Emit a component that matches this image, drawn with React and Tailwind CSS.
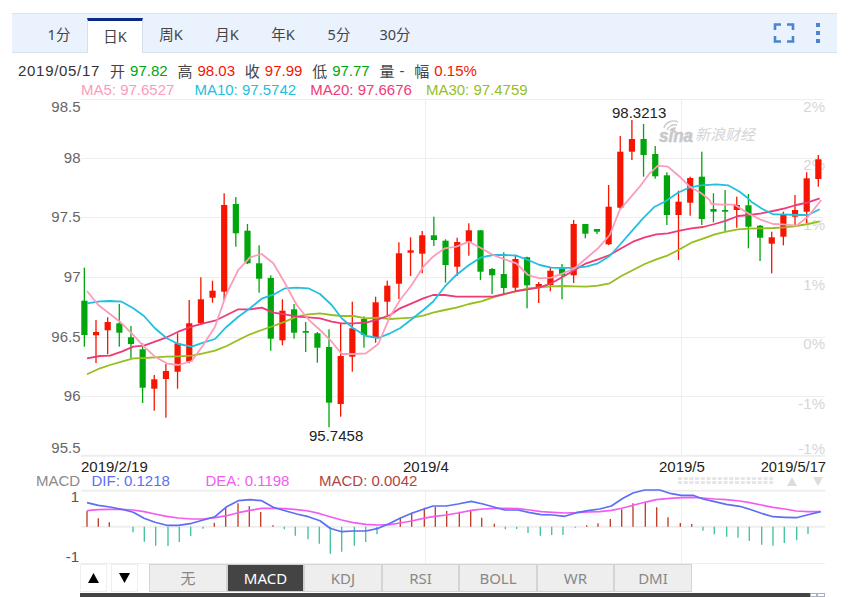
const RED = '#f61500';
const GREEN = '#00a60b';

// [red?, wickTop, wickBottom, bodyTop, bodyBottom]
const candles = [
  [0, 267.7, 346.7, 300.7, 335], [1, 320, 363, 332, 335.3], [1, 317.3, 354.3, 322, 330.3], [0, 304, 346.7, 323.3, 332.7],
  [0, 326, 358, 337.3, 344], [0, 343.3, 403, 349.3, 387.7], [1, 375, 410.7, 379.3, 388.7], [1, 364, 417.7, 371, 379],
  [1, 333.3, 388.7, 343.3, 371.7], [1, 300, 363.3, 323.3, 361.7], [1, 277.3, 325, 299.3, 323.3], [1, 280.7, 302.7, 290.7, 297.7],
  [1, 193.3, 300.7, 205, 291.7], [0, 197, 246.7, 204, 233.3], [0, 224, 264, 230.7, 263.3], [0, 245.3, 292.7, 263.3, 278.7],
  [0, 275.3, 350.7, 278, 338.7], [1, 299.3, 345.3, 310.7, 340.3], [0, 304, 338.7, 309.3, 332.7], [0, 322, 352, 331, 332.7],
  [0, 332, 362.7, 333.3, 347.7], [0, 329.3, 427.3, 347, 402.7], [1, 324, 416.7, 356, 404], [1, 301.7, 371.7, 328.3, 356.7],
  [0, 316.3, 347.7, 319, 335], [1, 296.7, 342.7, 302.3, 337.3], [1, 280.7, 315, 285.7, 301.7], [1, 242.3, 299, 253.3, 283.7],
  [1, 237.3, 276, 250.3, 252.7], [1, 231, 273.3, 235.3, 253.7], [0, 216.7, 246, 235.3, 240], [0, 239.3, 282.7, 240.7, 265],
  [1, 237.7, 276, 242, 266.7], [1, 223.3, 255.7, 230.3, 241.7], [0, 230, 280, 230.3, 271.7], [0, 268, 294, 269, 275.3],
  [0, 252.3, 294, 274, 288], [1, 254.7, 291.3, 259, 287.7], [0, 256.7, 308.3, 257.3, 285.3], [1, 282, 303, 284, 287.3],
  [1, 267.7, 291.3, 270.7, 285], [0, 264, 299.3, 269, 275.3], [1, 220, 283, 224, 275.3], [0, 224, 238.3, 224, 233.7],
  [0, 229, 234, 229, 231.7], [1, 185, 245, 206.7, 244.3], [1, 136, 210, 151.7, 207.7], [1, 120, 160, 139, 151.7],
  [0, 124, 176.7, 139, 155], [0, 146, 178.7, 154, 176.3], [0, 172.3, 225, 175.3, 215], [1, 190.7, 260, 201.7, 215],
  [1, 176.7, 215.7, 178, 202.7], [0, 151.7, 225, 176.7, 219], [0, 193.3, 222.3, 209, 211.7], [0, 190, 231.7, 210, 211.7],
  [1, 196.7, 227.7, 205, 210], [0, 194, 248.3, 205.3, 226.7], [0, 225, 261, 225.7, 237.7], [1, 231.7, 273.3, 237.3, 243.7],
  [1, 211.7, 245.3, 215, 236.7], [1, 195, 225, 210, 216.7], [1, 172.3, 223.3, 178.3, 211.7], [1, 155, 186.7, 159.3, 179],
];

const pts = (list) => list.map((p) => `${p[0].toFixed(1)},${p[1].toFixed(1)}`).join(' ');

const ma5 = [[87, 291], [98.3, 305], [110, 314], [121.7, 323.3], [133.3, 335], [144, 346.7], [155, 356.7], [166.7, 363.3], [178.3, 365], [191.7, 361], [203.3, 345], [215, 326.7], [226.7, 293.3], [238.3, 270], [250, 257.3], [261.7, 254], [273.3, 263.3], [285, 283.3], [296.7, 305], [308.3, 319.3], [320, 330], [331.7, 341.7], [341.7, 354], [353.3, 354], [366, 353.3], [378.3, 344], [390, 316.7], [400, 300], [411.7, 285], [423.3, 266.7], [433, 256.7], [444.7, 248.3], [456.3, 246.7], [469, 241.7], [481.3, 248.3], [493, 255], [504.7, 259.3], [516.3, 263.3], [528, 275], [539.7, 278.3], [551.3, 277.7], [563, 273.3], [574.7, 268.3], [586.3, 258.3], [598, 248.3], [609.7, 235], [619.7, 210], [629.7, 198.3], [639.7, 186.7], [649.7, 173.3], [658, 165.7], [668, 166.7], [679.7, 176.7], [689.7, 186.7], [701.3, 193.3], [709.7, 200], [711.3, 204], [723, 204.7], [734.7, 204.7], [748, 213.3], [759.7, 219.3], [773, 224], [783, 224.3], [796.3, 225.7], [808, 216.7], [821.3, 200]];
const ma10 = [[87, 303.3], [100, 301.3], [110, 301], [121.7, 301.7], [133.3, 308.3], [144, 316], [155, 328.3], [166.7, 338.3], [178.3, 344], [191.7, 346.7], [203.3, 342.7], [215, 339], [226.7, 326.7], [238.3, 316.7], [250, 308.3], [261.7, 298.7], [273.3, 294.7], [285, 288.3], [296.7, 287.7], [308.3, 288.3], [320, 294], [331.7, 305], [341.7, 318.3], [353.3, 328.3], [366, 336], [378.3, 338], [390, 333.3], [400, 328.3], [411.7, 319.3], [423.3, 310], [433, 301.7], [444.7, 286.7], [456.3, 275], [469, 265], [481.3, 257.3], [493, 255], [504.7, 255], [516.3, 255.7], [528, 260], [539.7, 265], [551.3, 267.7], [563, 268], [574.7, 267.7], [586.3, 266.7], [598, 263.3], [609.7, 256], [619.7, 245], [631.3, 231.7], [643, 218.3], [654.7, 206.7], [664.7, 201.7], [678, 192.7], [689.7, 187.3], [701.3, 185.3], [716.3, 184.3], [728, 185.3], [739.7, 191.7], [748, 198.3], [751.3, 201.7], [761.3, 208.3], [773, 214.3], [783, 214.3], [796.3, 215], [808, 215], [819.7, 209.3]];
const ma20 = [[87, 358.3], [100, 356], [110, 355.7], [121.7, 351.7], [133.3, 346.7], [144, 345.7], [155, 341.7], [166.7, 337.3], [178.3, 331.7], [191.7, 326.7], [203.3, 323.3], [215, 320.7], [226.7, 315], [238.3, 309.3], [250, 309.3], [261.7, 307.7], [273.3, 312.7], [285, 314.3], [296.7, 316.7], [308.3, 317.3], [320, 318.3], [331.7, 321.7], [341.7, 323.3], [353.3, 323.3], [366, 322.7], [378.3, 319.3], [390, 315], [400, 308.3], [411.7, 303.3], [423.3, 298.3], [433, 295], [444.7, 295], [456.3, 296.7], [469, 296.7], [481.3, 296.7], [493, 296.7], [504.7, 294], [516.3, 291], [528, 289.3], [539.7, 287.3], [551.3, 283.3], [563, 276.7], [574.7, 270], [586.3, 263.3], [598, 259.3], [609.7, 255], [621.3, 248.3], [633, 241.7], [644.7, 237.3], [656.3, 234.3], [668, 233.3], [679.7, 230.7], [691.3, 228.3], [703, 227], [714.7, 224], [726.3, 220.7], [738, 216], [749.7, 215], [761.3, 213.3], [773, 211], [784.7, 208.3], [796.3, 205], [808, 202.3], [819.7, 198.3]];
const ma30 = [[87, 374.3], [100, 368.3], [110, 365], [121.7, 361.7], [133.3, 358.3], [144, 358], [155, 357.3], [166.7, 356.7], [178.3, 356.3], [191.7, 355.7], [203.3, 353.3], [215, 350.7], [226.7, 346], [238.3, 340], [250, 334.3], [261.7, 330], [273.3, 326], [285, 321.7], [296.7, 316.7], [308.3, 314.3], [320, 313.3], [331.7, 315], [341.7, 316], [353.3, 316], [366, 318.3], [378.3, 317.7], [390, 319], [400, 318.3], [411.7, 317.7], [423.3, 315.7], [433, 312.7], [444.7, 310], [456.3, 307.7], [469, 304], [481.3, 301.3], [493, 297.3], [504.7, 294], [516.3, 291.3], [528, 288.3], [539.7, 287.3], [551.3, 286.3], [563, 286], [574.7, 286.3], [586.3, 286.7], [598, 285.7], [609.7, 283.3], [621.3, 276], [633, 270], [644.7, 264], [656.3, 259.3], [668, 255.3], [679.7, 249.3], [691.3, 242.7], [703, 238.7], [714.7, 234.3], [726.3, 231.7], [738, 229.3], [749.7, 228.7], [761.3, 228.3], [773, 228], [784.7, 227.3], [796.3, 226], [808, 224], [819.7, 221.3]];

const dif = [[87, 502.7], [98.3, 505.3], [110, 507], [121.7, 509.3], [133.3, 512.3], [144, 518.3], [155, 522.3], [166.7, 525.3], [178.3, 525.3], [191.7, 523.3], [203.3, 520], [215, 516.7], [226.7, 506.7], [238.3, 500.7], [250, 499.7], [261.7, 500.7], [273.3, 507.3], [285, 510.7], [296.7, 514], [308.3, 516.7], [320, 520.7], [330, 528.3], [341.7, 531.7], [353.3, 531], [366, 531], [378.3, 528.3], [390, 523.3], [400, 518.3], [411.7, 513.3], [423.3, 509.3], [433, 506], [446.3, 506], [458, 504], [471.3, 501.3], [483, 504], [494.7, 507.3], [504.7, 510], [518, 510], [529.7, 512.7], [541.3, 514.7], [553, 515], [564.7, 516.3], [576.3, 512.7], [588, 510.7], [599.7, 509], [611.3, 506], [623, 498.3], [633, 493], [644.7, 490], [659.7, 490], [671.3, 493.7], [681.3, 495.3], [693, 495.3], [703, 499], [714.7, 501.7], [726.3, 504.3], [739.7, 506.3], [749.7, 509.3], [761.3, 513.3], [773, 516.7], [784.7, 517.3], [796.3, 517.7], [808, 514.7], [820.7, 511.7]];
const dea = [[87, 510.7], [98.3, 509.7], [110, 509.3], [121.7, 509.3], [133.3, 510], [144, 511.7], [155, 514], [166.7, 516.3], [178.3, 518], [191.7, 519], [203.3, 519], [215, 517.7], [226.7, 515.7], [238.3, 512.7], [250, 510.3], [261.7, 508.3], [273.3, 508.3], [285, 508.7], [296.7, 509.7], [308.3, 511], [320, 513.7], [330, 516.7], [341.7, 520], [353.3, 522.7], [366, 524.3], [378.3, 525], [390, 524.7], [400, 523], [411.7, 521], [423.3, 518.3], [433, 516.7], [446.3, 515], [458, 513], [471.3, 510.3], [483, 509], [494.7, 508.3], [504.7, 508.3], [518, 508.7], [529.7, 510], [541.3, 511.7], [553, 512.3], [564.7, 513], [576.3, 512.7], [588, 512], [599.7, 511.7], [611.3, 510.3], [623, 508], [633, 505.3], [644.7, 502.3], [656.3, 499.7], [669.7, 498.3], [681.3, 497.7], [693, 497.3], [703, 498], [714.7, 499], [726.3, 499.7], [739.7, 501], [749.7, 502.7], [761.3, 505], [773, 507.3], [784.7, 509], [796.3, 511], [808, 511.7], [820.7, 511.7]];

// x, end y of each histogram bar (zero line is at y=526.7)
const bars = [[87, 511], [98.3, 518.3], [109.3, 522.3], [133, 532.3], [144.3, 541.7], [155.7, 545.7], [168, 546], [179.3, 542], [190.7, 536], [203, 528.7], [214.3, 522.7], [225.7, 507.3], [238, 503.3], [249.3, 506.3], [260.7, 512], [273, 525.3], [284.3, 529.3], [295.3, 535.7], [308, 539.3], [319.3, 543.7], [330.3, 553.7], [341.7, 551.7], [354.3, 545.7], [365.7, 542], [377, 534.3], [400.3, 517.7], [411.7, 512.7], [424.3, 507.7], [435.3, 506.7], [446.7, 511], [459.3, 511.7], [470.7, 510.3], [481.7, 517.7], [494.3, 523.7], [505.3, 529.3], [516.7, 529], [528, 533], [540.3, 535.7], [551.7, 535], [563, 535], [575.3, 527.7], [586.7, 525.3], [598, 523.3], [610.3, 519], [621.7, 509.3], [633, 503.3], [645.3, 502.7], [656.7, 507.3], [668, 517.3], [680.3, 523], [691.7, 524], [703, 530.7], [714.3, 534.3], [726.7, 536.7], [738, 537.7], [749.3, 541], [761.7, 544.7], [773, 545.7], [784.3, 543], [796.7, 540.3], [808, 534]];

const leftAxis = [['98.5', 112], ['98', 163], ['97.5', 222], ['97', 282], ['96.5', 342], ['96', 401], ['95.5', 453]];
const rightAxis = [['2%', 112], ['2%', 170], ['1%', 230], ['1%', 290], ['0%', 349], ['-1%', 409], ['-1%', 454]];
const hLines = [99.5, 158.5, 217.5, 277.5, 337.5, 396.5];

function Chart() {
  return (
    <svg viewBox="0 99 866 465" className="block w-[866px] h-[465px]" fontFamily="'Liberation Sans', sans-serif" fontSize="15">
      {hLines.map((y) => (
        <line key={y} x1="81" x2="825" y1={y} y2={y} stroke="#eeeeee" />
      ))}
      <line x1="81" x2="825" y1="455.7" y2="455.7" stroke="#eeeeee" strokeWidth="2" />
      <line x1="425.5" x2="425.5" y1="100" y2="456" stroke="#eeeeee" />
      <line x1="681.5" x2="681.5" y1="100" y2="456" stroke="#eeeeee" />
      <line x1="81" x2="825" y1="490.7" y2="490.7" stroke="#eeeeee" strokeWidth="2" />
      <line x1="81" x2="825" y1="526.7" y2="526.7" stroke="#eeeeee" strokeWidth="2" />
      <line x1="81" x2="825" y1="563.5" y2="563.5" stroke="#eeeeee" />
      <line x1="425.5" x2="425.5" y1="491" y2="564" stroke="#eeeeee" />
      <line x1="681.5" x2="681.5" y1="491" y2="564" stroke="#eeeeee" />

      {leftAxis.map(([t, y]) => (
        <text key={t} x="80.5" y={y} textAnchor="end" fill="#666666">{t}</text>
      ))}
      {rightAxis.map(([t, y]) => (
        <text key={y} x="825" y={y} textAnchor="end" fill="#d6d6d6">{t}</text>
      ))}

      {/* sina watermark */}
      <g fill="#c9c9c9">
        <path d="M664 128c1-5 8-9 14-6M667 130c1-3 5-6 10-5M670 131c1-2 3-3 6-3" fill="none" stroke="#c9c9c9" strokeWidth="1.4" />
        <circle cx="674" cy="131" r="1.8" />
        <text x="659" y="142" fontSize="18" fontWeight="bold" fontStyle="italic" stroke="#c9c9c9" strokeWidth="0.6" textLength="34" lengthAdjust="spacingAndGlyphs">sina</text>
        <text x="695" y="140" fontSize="15" fontStyle="italic" fontFamily="'Noto Sans CJK SC', sans-serif" fill="#d4d4d4">新浪财经</text>
      </g>

      {candles.map(([up, wt, wb, bt, bb], i) => {
        const x = 84.3 + i * 11.65;
        const color = up ? RED : GREEN;
        return (
          <g key={i} fill={color}>
            <rect x={x - 0.6} y={wt} width="1.3" height={wb - wt} />
            <rect x={x - 3} y={bt} width="6.2" height={Math.max(bb - bt, 1.5)} />
          </g>
        );
      })}

      <polyline points={pts(ma30)} fill="none" stroke="#96bf1e" strokeWidth="1.8" strokeLinejoin="round" />
      <polyline points={pts(ma20)} fill="none" stroke="#ee3a78" strokeWidth="1.8" strokeLinejoin="round" />
      <polyline points={pts(ma10)} fill="none" stroke="#22bfe0" strokeWidth="1.8" strokeLinejoin="round" />
      <polyline points={pts(ma5)} fill="none" stroke="#fb9dba" strokeWidth="1.8" strokeLinejoin="round" />

      <text x="612" y="118" fill="#222222">98.3213</text>
      <text x="309" y="441" fill="#222222">95.7458</text>

      <text x="81" y="472" fill="#222222">2019/2/19</text>
      <text x="403" y="472" fill="#222222">2019/4</text>
      <text x="659" y="472" fill="#222222">2019/5</text>
      <text x="826" y="472" textAnchor="end" fontSize="14.7" fill="#222222">2019/5/17</text>

      <text x="36" y="486" fill="#8a8a8a">MACD</text>
      <text x="91.5" y="486" fill="#5b6ef5">DIF: 0.1218</text>
      <text x="205.5" y="486" fill="#f25cf0">DEA: 0.1198</text>
      <text x="319" y="486" fill="#b04545">MACD: 0.0042</text>

      <line x1="678" x2="775" y1="478.5" y2="478.5" stroke="#e6e6e6" strokeWidth="3" strokeDasharray="4 1.7" />
      <line x1="678" x2="775" y1="482.5" y2="482.5" stroke="#e6e6e6" strokeWidth="3" strokeDasharray="4 1.7" />
      <polygon points="792,477 797,486 787,486" fill="#dddddd" />
      <polygon points="813,477 823,477 818,486" fill="#dddddd" />

      <text x="79" y="502" textAnchor="end" fill="#555555">1</text>
      <text x="79" y="562" textAnchor="end" fill="#555555">-1</text>

      {bars.map(([x, y]) => (
        <line key={x} x1={x} x2={x} y1="526.7" y2={y} stroke={y < 526.7 ? '#c23620' : '#3ac19a'} strokeWidth="1.3" />
      ))}
      <polyline points={pts(dea)} fill="none" stroke="#f25cf0" strokeWidth="1.7" strokeLinejoin="round" />
      <polyline points={pts(dif)} fill="none" stroke="#5b6ef5" strokeWidth="1.7" strokeLinejoin="round" />
    </svg>
  );
}

function Stat({ label, value, color }) {
  return (
    <div className="flex gap-[5px] mr-[9.8px]">
      <span className="text-[#444] font-['Noto_Sans_CJK_SC',sans-serif] text-[15px]">{label}</span>
      <span className={color}>{value}</span>
    </div>
  );
}

const tabs = ['1分', '日K', '周K', '月K', '年K', '5分', '30分'];
const lowerTabs = [
  ['无', 'w-[78px]'], ['MACD', 'w-[77px]'], ['KDJ', 'w-[78px]'], ['RSI', 'w-[77px]'],
  ['BOLL', 'w-[78px]'], ['WR', 'w-[77px]'], ['DMI', 'w-[78px]'],
];

export default function App() {
  return (
    <div className="w-[866px] h-[597px] overflow-hidden bg-white pt-[13px] font-['Liberation_Sans','Noto_Sans_CJK_SC',sans-serif]">
      <div className="ml-[12px] w-[825px] h-[40px] flex items-end pl-[19px] bg-[#eaf2fd] border-y border-[#d9e3f0] font-['Noto_Sans','Noto_Sans_CJK_SC',sans-serif] text-[14.5px] text-[#444]">
        {tabs.map((t) => (
          <div
            key={t}
            className={
              t === '日K'
                ? 'w-[56px] h-[35px] -mb-px flex items-center justify-center bg-white border-x border-[#d5e0ef] border-t-[3px] border-t-[#0a2a85]'
                : 'w-[56px] h-[35px] flex items-center justify-center'
            }
          >
            {t}
          </div>
        ))}
        <div className="flex-1 h-full flex items-center justify-end pr-[17px] gap-[21px]">
          <svg width="22" height="22" viewBox="0 0 22 22" fill="none" stroke="#4a86d0" strokeWidth="2.6">
            <path d="M2 8V2.5H8M14 2.5H20V8M20 14V19.5H14M8 19.5H2V14" />
          </svg>
          <svg width="4" height="20" viewBox="0 0 4 20" fill="#4a86d0">
            <rect y="0" width="4" height="4" />
            <rect y="8" width="4" height="4" />
            <rect y="16" width="4" height="4" />
          </svg>
        </div>
      </div>

      <div className="mt-[8px] h-[20px] flex items-center pl-[18px] text-[15px]">
        <span className="text-[#333] tracking-[0.7px] mr-[10px]">2019/05/17</span>
        <Stat label="开" value="97.82" color="text-[#00a60b]" />
        <Stat label="高" value="98.03" color="text-[#f61500]" />
        <Stat label="收" value="97.99" color="text-[#f61500]" />
        <Stat label="低" value="97.77" color="text-[#00a60b]" />
        <Stat label="量" value="-" color="text-[#444]" />
        <Stat label="幅" value="0.15%" color="text-[#f61500]" />
      </div>

      <div className="h-[18px] flex items-center pl-[81px] text-[15px]">
        <span className="text-[#fb9dba] mr-[20px]">MA5: 97.6527</span>
        <span className="text-[#22bfe0] mr-[14px]">MA10: 97.5742</span>
        <span className="text-[#ee3a78] mr-[14px]">MA20: 97.6676</span>
        <span className="text-[#96bf1e]">MA30: 97.4759</span>
      </div>

      <Chart />

      <div className="ml-[80px] h-[28px] flex">
        <div className="w-[27px] h-[28px] flex items-center justify-center border border-[#eeeeee]">
          <svg width="11" height="10" viewBox="0 0 11 10"><polygon points="5.5,0 11,10 0,10" fill="#000" /></svg>
        </div>
        <div className="w-[27px] h-[28px] ml-[3.5px] flex items-center justify-center border border-[#eeeeee]">
          <svg width="11" height="10" viewBox="0 0 11 10"><polygon points="0,0 11,0 5.5,10" fill="#000" /></svg>
        </div>
        <div className="ml-[11.5px] flex font-['Noto_Sans','Noto_Sans_CJK_SC',sans-serif] text-[15px]">
          {lowerTabs.map(([t, w]) => (
            <div
              key={t}
              className={
                t === 'MACD'
                  ? `${w} flex items-center justify-center bg-[#444444] text-white border border-[#cfcfcf]`
                  : `${w} flex items-center justify-center bg-[#eeeeee] text-[#888888] border border-[#d4d4d4]`
              }
            >
              {t}
            </div>
          ))}
        </div>
      </div>

      <div className="ml-[80px] mt-px w-[745px] h-[4px] flex">
        <div className="w-[730px] bg-[#444444]" />
        <div className="w-[7px] border border-[#aab0c0] bg-white" />
        <div className="w-[8px] border border-[#aab0c0] bg-white" />
      </div>
    </div>
  );
}
